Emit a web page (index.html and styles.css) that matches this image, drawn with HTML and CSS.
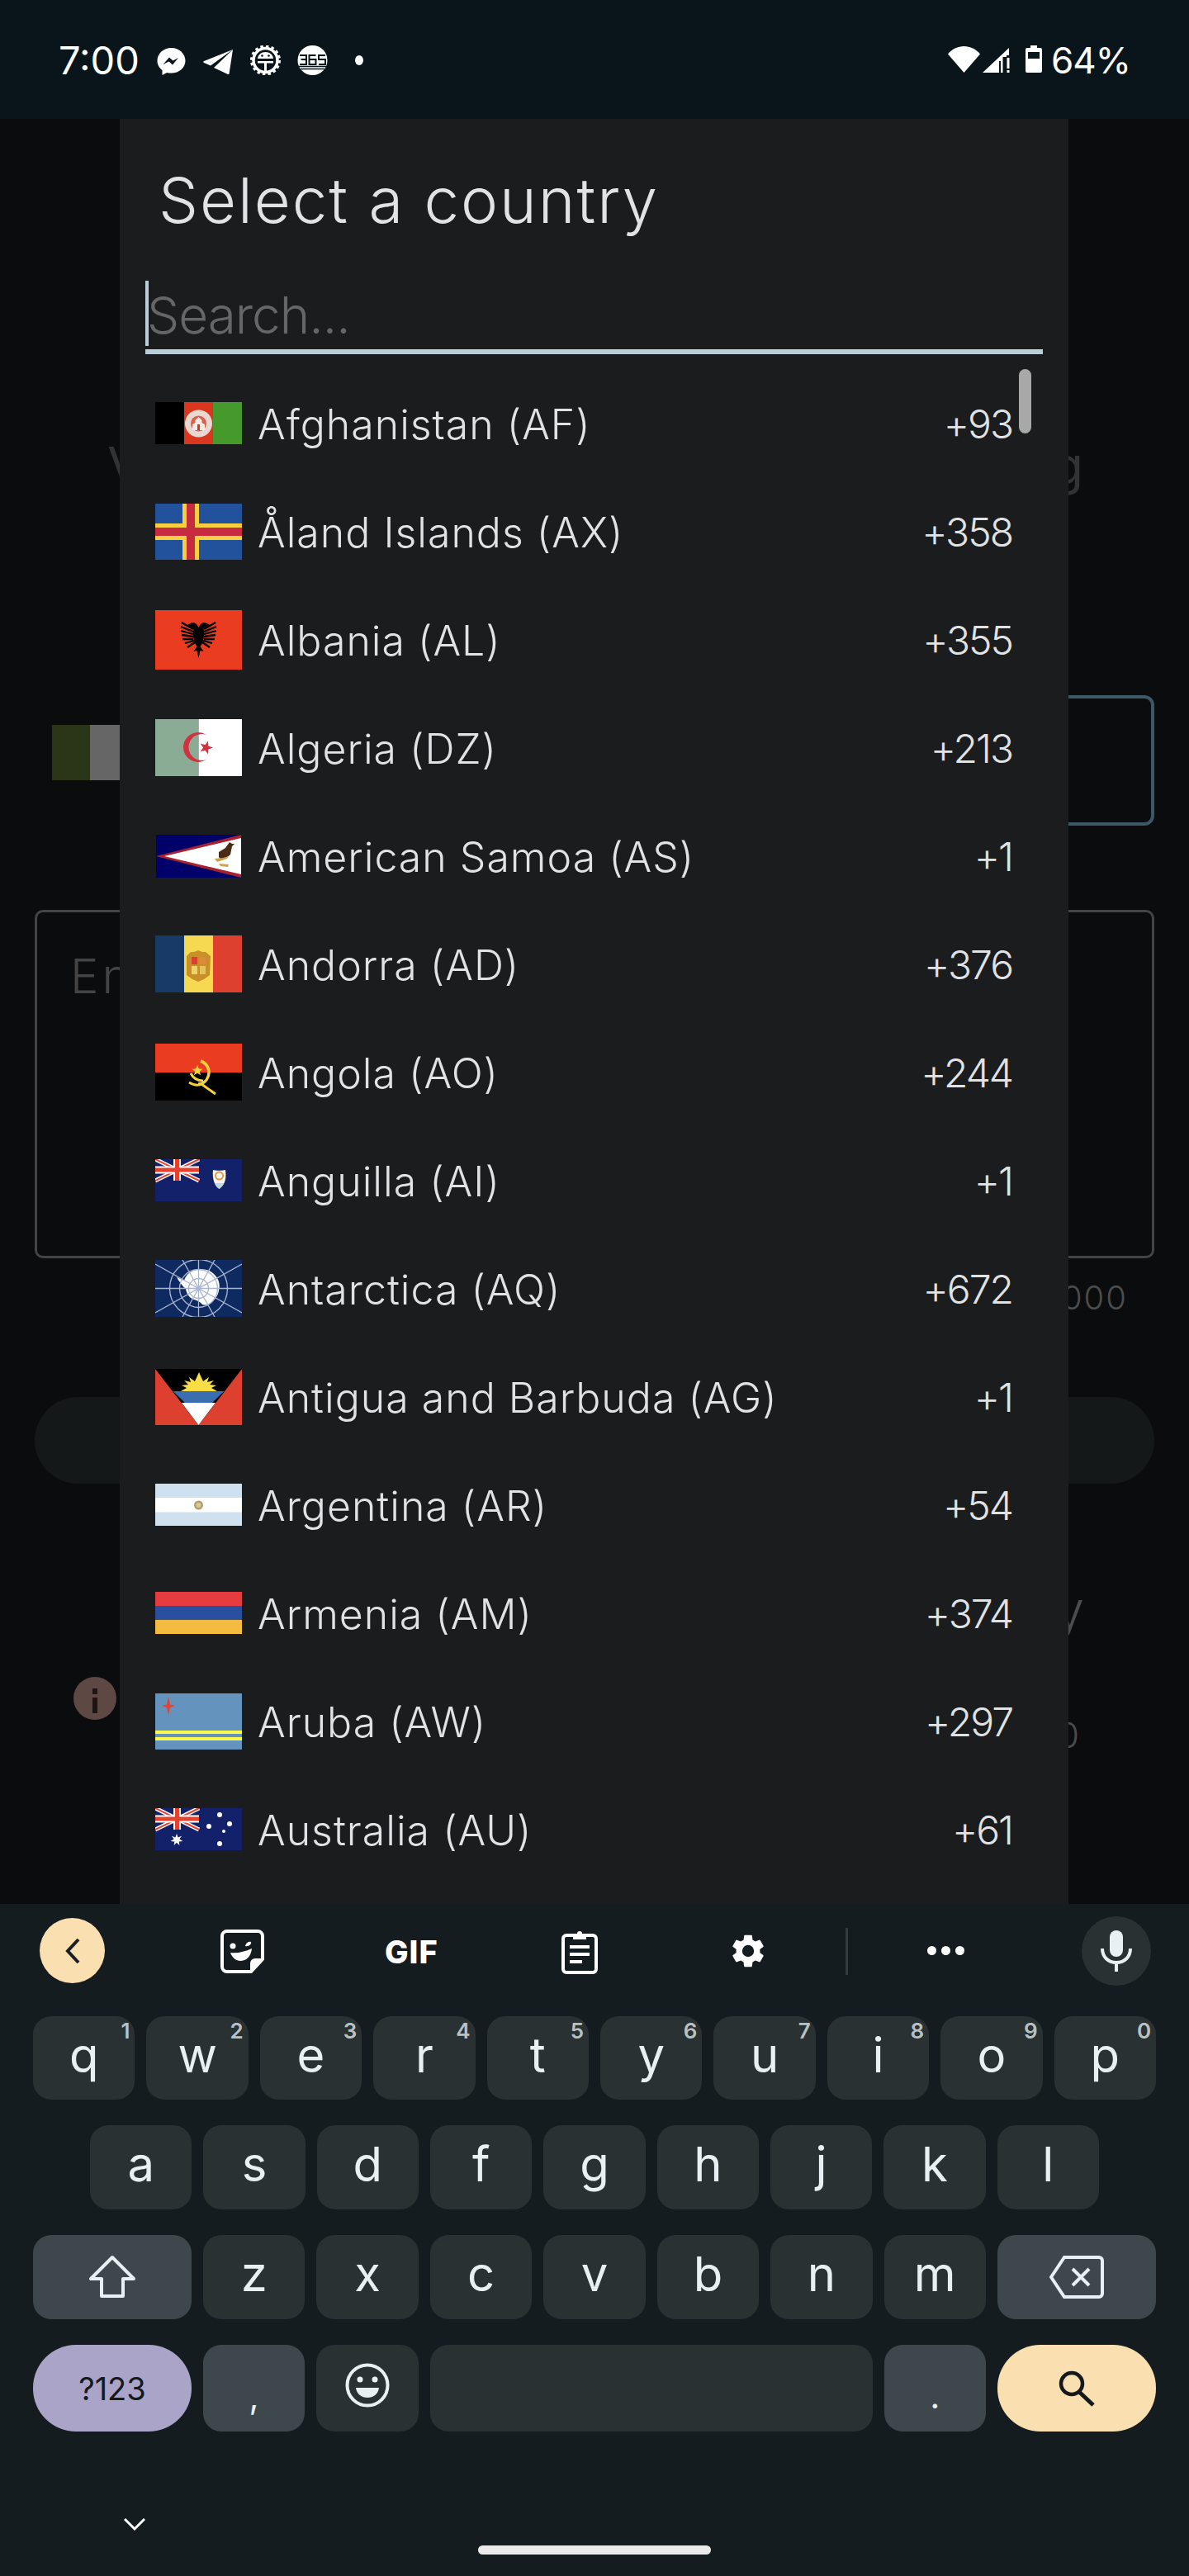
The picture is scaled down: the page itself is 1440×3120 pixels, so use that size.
FILE: index.html
```html
<!DOCTYPE html>
<html lang="en">

<head>
    <meta charset="UTF-8">
    <meta name="viewport" content="width=device-width, initial-scale=1.0">
    <title>Select a country</title>
    <link rel="stylesheet" href="styles.css">
</head>

<body>
    <div class="phone">
        <!-- status bar -->
        <header class="status">
            <div class="status-left">
                <span class="clock">7:00</span>
                <svg class="st-messenger" viewBox="0 0 35 34"><path fill="#fff" d="M17.500 1C8 1 .5 8 .5 16.500c0 4.800 2.300 8.800 6 11.500V34l5.600-3.100c1.700.5 3.500.7 5.400.7 9.500 0 17-6.700 17-15.100S27 1 17.500 1z"/><path fill="#09151b" d="M7.500 21l7.500-8.500 4.500 4 6.500-3.500-7 8.500-4.500-4z"/></svg>
                <svg class="st-telegram" viewBox="0 0 37 30"><path fill="#fff" d="M36 0L1 14c-1 .5-1 1.500 0 2l8 3.500z"/><path fill="#fff" d="M36 0L13 22l17 8c1 .4 1.500 0 1.600-1z"/></svg>
                <svg class="st-bug" viewBox="0 0 37 36"><circle cx="18.500" cy="18" r="14.500" fill="none" stroke="#fff" stroke-width="3.500"/><circle cx="18.500" cy="18" r="17" fill="none" stroke="#fff" stroke-width="3" stroke-dasharray="3.500 3.170"/><path fill="#fff" d="M9 16c.5-5 4.500-8 9.500-8s9 3 9.500 8z"/><path fill="#fff" d="M9 19h19v2.500h-8V31h-3v-9.500H9z"/><circle cx="14.500" cy="12.500" r="1.300" fill="#09151b"/><circle cx="22.500" cy="12.500" r="1.300" fill="#09151b"/></svg>
                <svg class="st-365" viewBox="0 0 37 36"><ellipse cx="18.500" cy="18" rx="18" ry="18" fill="#fff"/><path fill="none" stroke="#09151b" stroke-width="1.500" d="M2 25.500h33M4 28.500h29"/><path fill="none" stroke="#09151b" stroke-width="2" d="M3 12h8v5H4.500M11 17v6H3M22.500 12h-8v11h8v-6h-8M34 12h-8v5h8v6h-8"/></svg>
                <span class="st-dot"></span>
            </div>
            <div class="status-right">
                <svg class="st-wifi" viewBox="0 0 39 32"><path fill="#fff" d="M19.500 32L0 9.500C5 3.500 12 0 19.500 0S34 3.500 39 9.500z"/></svg>
                <svg class="st-signal" viewBox="0 0 33 31"><path fill="#fff" d="M0 31L32 1v9h-3v2h-4.500v19z"/><rect x="20" y="17" width="2" height="14" fill="#09151b"/><rect x="29.500" y="13" width="3" height="13" fill="#fff"/><rect x="29.500" y="28" width="3" height="3" fill="#fff"/></svg>
                <svg class="st-battery" viewBox="0 0 20 33"><path fill="#fff" d="M6 0h8v3h4a2 2 0 0 1 2 2v26a2 2 0 0 1-2 2H2a2 2 0 0 1-2-2V5a2 2 0 0 1 2-2h4z"/><rect x="3" y="8" width="14" height="8" fill="#09151b"/></svg>
                <span class="percent">64%</span>
            </div>
        </header>

        <main class="screen">
            <!-- dimmed page behind the dialog -->
            <div class="page">
                <div class="page-title"><span>V</span><span>g</span></div>
                <div class="phone-row">
                    <div class="page-flag"><i></i><b></b></div>
                    <div class="phone-input"></div>
                </div>
                <div class="message-box">Enter</div>
                <div class="counter">000</div>
                <div class="send-btn"></div>
                <div class="page-note"><span>y</span></div>
                <div class="info-row">
                    <span class="info-icon">
                        <svg viewBox="0 0 52 52"><rect x="23" y="14" width="6" height="7" fill="#1d1615"/><rect x="23" y="25" width="6" height="19" fill="#1d1615"/></svg>
                    </span>
                    <span class="info-tail">0</span>
                </div>
            </div>

            <!-- country dialog -->
            <section class="dialog">
                <h1>Select a country</h1>
                <div class="search">
                    <span class="caret"></span>
                    <span class="placeholder">Search...</span>
                </div>
                <div class="scroll-thumb"></div>
                <ul class="country-list">
                    <li>
                        <span class="flag">
                            <svg width="105" height="51" viewBox="0 0 105 51"><rect width="35" height="51" fill="#000"/><rect x="35" width="35" height="51" fill="#d9381e"/><rect x="70" width="35" height="51" fill="#459a2b"/><circle cx="52.500" cy="26" r="16.500" fill="#e9d8d2"/><circle cx="52.500" cy="26" r="9.500" fill="#d9604a"/><path fill="#f4ebe7" d="M45 34h15v-7l-3.500-2v-3l-4-4-4 4v3L45 27z"/><path fill="#d9381e" d="M51 27h3v7h-3z"/></svg>
                        </span>
                        <span class="name">Afghanistan (AF)</span>
                        <span class="code">+93</span>
                    </li>
                    <li>
                        <span class="flag">
                            <svg width="105" height="68" viewBox="0 0 105 68"><rect width="105" height="68" fill="#21529b"/><rect x="33" width="20" height="68" fill="#f8cf3f"/><rect y="24" width="105" height="20" fill="#f8cf3f"/><rect x="38" width="10" height="68" fill="#c62b3f"/><rect y="29" width="105" height="10" fill="#c62b3f"/></svg>
                        </span>
                        <span class="name">Åland Islands (AX)</span>
                        <span class="code">+358</span>
                    </li>
                    <li>
                        <span class="flag">
                            <svg width="105" height="72" viewBox="0 0 105 72"><rect width="105" height="72" fill="#e93c20"/><g stroke="#000" stroke-width="2.300" fill="none"><path d="M46 23L32 15M46 26L31 20M46 29L31 25M46 32L32 30M46 35L33 35M47 37L36 40M48 39L39 45M59 23L73 15M59 26L74 20M59 29L74 25M59 32L73 30M59 35L72 35M58 37L69 40M57 39L66 45"/></g><path fill="#000" d="M38 19c4-4 9-5 12-2l2.500 4 2.500-4c3-3 8-2 12 2-3 0-7 1-8.500 4 1.500 6 0 14-2 18l-2 3 4 6-4-1-2 9-2-9-4 1 4-6-2-3c-2-4-3.500-12-2-18-1.500-3-5.500-4-8.500-4z"/></svg>
                        </span>
                        <span class="name">Albania (AL)</span>
                        <span class="code">+355</span>
                    </li>
                    <li>
                        <span class="flag">
                            <svg width="105" height="69" viewBox="0 0 105 69"><rect width="52.500" height="69" fill="#8aab94"/><rect x="52.500" width="52.500" height="69" fill="#fff"/><path fill="#d2323f" d="M62 19A18 18 0 1 0 62 49A16 16 0 1 1 62 19z"/><path fill="#d2323f" d="M70 34.500L64.250 36.500L64.100 42.600L60.450 37.700L54.600 39.500L58.100 34.500L54.600 29.500L60.450 31.300L64.100 26.400L64.250 32.500z"/></svg>
                        </span>
                        <span class="name">Algeria (DZ)</span>
                        <span class="code">+213</span>
                    </li>
                    <li>
                        <span class="flag">
                            <svg width="103" height="52" viewBox="0 0 103 52"><rect width="103" height="52" fill="#00006a"/><path fill="#a8212f" d="M0 26L103 0v52z"/><path fill="#fff" d="M10 26l93-22v44z"/><path fill="#4a2c16" d="M76 21l8-5 5-7 3 2 3 0-3 3-2 10-6 5-5 2-3-4z"/><path fill="#c9a24a" d="M71 29l10-1 7-2-2 3-12 4zM76 35l12 1-1 3-9-1z"/></svg>
                        </span>
                        <span class="name">American Samoa (AS)</span>
                        <span class="code">+1</span>
                    </li>
                    <li>
                        <span class="flag">
                            <svg width="105" height="69" viewBox="0 0 105 69"><rect width="35" height="69" fill="#183a66"/><rect x="35" width="35" height="69" fill="#f7d851"/><rect x="70" width="35" height="69" fill="#de402f"/><path fill="#c98f28" d="M38 25l5-5h4l5-2 5 2 4 0 6 5-1 23-7 5-7 3-7-3-7-5z"/><rect x="44" y="26" width="7" height="9" fill="#d9402f"/><rect x="54" y="26" width="7" height="9" fill="#dd8a3a"/><rect x="44" y="37" width="7" height="10" fill="#eed36a"/><rect x="54" y="37" width="7" height="10" fill="#e6c25a"/></svg>
                        </span>
                        <span class="name">Andorra (AD)</span>
                        <span class="code">+376</span>
                    </li>
                    <li>
                        <span class="flag">
                            <svg width="105" height="69" viewBox="0 0 105 69"><rect width="105" height="35" fill="#e93c20"/><rect y="35" width="105" height="34" fill="#000"/><path fill="none" stroke="#f5d33f" stroke-width="3.500" d="M55 21c8 3 12 11 9 19-2 6-7 9-12 9"/><path fill="none" stroke="#f5d33f" stroke-width="3" d="M43 36c3 6 9 9 15 9M41 47c5 3 11 4 15 2l17 12"/><path fill="#f5d33f" d="M51 26l1.800 4.500 4.700.2-3.700 3 1.300 4.600-4.100-2.600-4.100 2.600 1.300-4.600-3.700-3 4.700-.2z"/></svg>
                        </span>
                        <span class="name">Angola (AO)</span>
                        <span class="code">+244</span>
                    </li>
                    <li>
                        <span class="flag">
                            <svg width="105" height="51" viewBox="0 0 105 51"><rect width="105" height="51" fill="#13216b"/><path stroke="#fff" stroke-width="5" d="M0 0l53 26M53 0L0 26"/><path stroke="#e4412f" stroke-width="2" d="M0 0l53 26M53 0L0 26"/><path stroke="#fff" stroke-width="9" d="M26.500 0v26M0 13h53"/><path stroke="#e4412f" stroke-width="5" d="M26.500 0v26M0 13h53"/><path fill="#f4f4f4" d="M70 13c3 1 12 1 15 0 1 8 1 17-7.500 23C71 32 69 22 70 13z"/><path fill="#bcd6ea" d="M72 29h11c-1 3-3 5-5.500 7-2.500-2-4.500-4-5.500-7z"/><circle cx="77.500" cy="20" r="4.500" fill="none" stroke="#e8993a" stroke-width="2"/></svg>
                        </span>
                        <span class="name">Anguilla (AI)</span>
                        <span class="code">+1</span>
                    </li>
                    <li>
                        <span class="flag">
                            <svg width="105" height="69" viewBox="0 0 105 69"><rect width="105" height="69" fill="#0e2a60"/><path fill="#fff" d="M26 21l9 4c2-7 8-12 15-13 8-2 17 0 22 6 5 5 7 12 5 19-1 7-5 11-10 15-3 3-7 3-10 2-2-3-6-5-10-6-6-2-9-7-10-13-4-3-8-9-11-14z"/><g fill="none" stroke="#a9b6d2" stroke-width="1.300"><circle cx="52.500" cy="34.500" r="35"/><circle cx="52.500" cy="34.500" r="23"/><circle cx="52.500" cy="34.500" r="12"/><path d="M52.500 0v69M0 34.500h105M0 5l105 59M105 5L0 64M33 0l39 69M72 0L33 69"/></g></svg>
                        </span>
                        <span class="name">Antarctica (AQ)</span>
                        <span class="code">+672</span>
                    </li>
                    <li>
                        <span class="flag">
                            <svg width="105" height="68" viewBox="0 0 105 68"><rect width="105" height="68" fill="#de402f"/><path fill="#000" d="M0 0h105L52.500 68z"/><path fill="#3a6eae" d="M21.500 27h62L69 41H36z"/><path fill="#fff" d="M32 41h41L52.500 68z"/><path fill="#f8dd47" d="M31 27l7-4-6-3 8-1-5-5 8 2-2-6 7 5 5-11 5 11 7-5-2 6 8-2-5 5 8 1-6 3 7 4z"/></svg>
                        </span>
                        <span class="name">Antigua and Barbuda (AG)</span>
                        <span class="code">+1</span>
                    </li>
                    <li>
                        <span class="flag">
                            <svg width="105" height="51" viewBox="0 0 105 51"><rect width="105" height="51" fill="#cfe0ee"/><rect y="17" width="105" height="17.500" fill="#fff"/><circle cx="52.500" cy="26" r="5.500" fill="#b5a06c"/><circle cx="52.500" cy="26" r="3" fill="#d9c99a"/></svg>
                        </span>
                        <span class="name">Argentina (AR)</span>
                        <span class="code">+54</span>
                    </li>
                    <li>
                        <span class="flag">
                            <svg width="105" height="51" viewBox="0 0 105 51"><rect width="105" height="17" fill="#e53c3f"/><rect y="17" width="105" height="17" fill="#2a4f9f"/><rect y="34" width="105" height="17" fill="#f3bc41"/></svg>
                        </span>
                        <span class="name">Armenia (AM)</span>
                        <span class="code">+374</span>
                    </li>
                    <li>
                        <span class="flag">
                            <svg width="105" height="68" viewBox="0 0 105 68"><rect width="105" height="68" fill="#6494bd"/><rect y="45" width="105" height="4" fill="#fbf94b"/><rect y="53" width="105" height="4" fill="#fbf94b"/><path fill="#e8402f" d="M16 4l2 9.500 6 1.500-6 2-2 9.500-2-9.500-6-2 6-1.500z"/></svg>
                        </span>
                        <span class="name">Aruba (AW)</span>
                        <span class="code">+297</span>
                    </li>
                    <li>
                        <span class="flag">
                            <svg width="105" height="51" viewBox="0 0 105 51"><rect width="105" height="51" fill="#13216b"/><path stroke="#fff" stroke-width="5" d="M0 0l53 26M53 0L0 26"/><path stroke="#e4412f" stroke-width="2" d="M0 0l53 26M53 0L0 26"/><path stroke="#fff" stroke-width="9" d="M26.500 0v26M0 13h53"/><path stroke="#e4412f" stroke-width="5" d="M26.500 0v26M0 13h53"/><path fill="#fff" d="M26 31l1.600 4.400 4.400-1.700-2.600 3.900 4 2.400-4.700.4.700 4.700-3.400-3.400-3.400 3.400.7-4.700-4.700-.4 4-2.400-2.600-3.900 4.400 1.700z"/><circle cx="78" cy="8" r="3" fill="#fff"/><circle cx="90" cy="19" r="3" fill="#fff"/><circle cx="65" cy="22" r="3" fill="#fff"/><circle cx="83" cy="28" r="2" fill="#fff"/><circle cx="78" cy="43" r="3" fill="#fff"/></svg>
                        </span>
                        <span class="name">Australia (AU)</span>
                        <span class="code">+61</span>
                    </li>
                </ul>
            </section>
        </main>

        <!-- keyboard -->
        <footer class="keyboard">
            <div class="kb-tools">
                <span class="tool-back">
                    <svg width="20" height="32" viewBox="0 0 20 32"><path fill="none" stroke="#1a2022" stroke-width="4" d="M17 2L4 16l13 14"/></svg>
                </span>
                <svg class="tool-sticker" width="53" height="53" viewBox="0 0 53 53"><path fill="none" stroke="#fff" stroke-width="4" d="M8 2h37a6 6 0 0 1 6 6v28L37 51H8a6 6 0 0 1-6-6V8a6 6 0 0 1 6-6z"/><path fill="#fff" d="M51 35L36 51V41a6 6 0 0 1 6-6z"/><circle cx="15" cy="20" r="3.500" fill="#fff"/><path fill="#fff" d="M30 20c1-4 4-6 7-5 1 3-3 6-7 5zM12 28c9 1 17-1 26-5-1 10-7 15-14 15-5 0-10-4-12-10z"/></svg>
                <span class="tool-gif">GIF</span>
                <svg class="tool-clip" width="44" height="54" viewBox="0 0 44 54"><path fill="none" stroke="#fff" stroke-width="4" d="M6 7h32a4 4 0 0 1 4 4v37a4 4 0 0 1-4 4H6a4 4 0 0 1-4-4V11a4 4 0 0 1 4-4z"/><path fill="#fff" d="M14 5h5a3 3 0 0 1 6 0h5v7H14zM10 19h24v4H10zM10 28h24v4H10zM10 37h15v4H10z"/></svg>
                <svg class="tool-gear" width="48" height="48" viewBox="0 0 24 24"><path fill="#fff" d="M19.140 12.940c.04-.3.060-.61.060-.94s-.02-.64-.070-.94l2.030-1.580a.49.49 0 0 0 .12-.61l-1.920-3.320a.49.49 0 0 0-.59-.22l-2.390.96a7 7 0 0 0-1.620-.94l-.36-2.540a.48.480 0 0 0-.48-.41h-3.840a.48.480 0 0 0-.47.41l-.36 2.540c-.59.24-1.130.57-1.620.94l-2.390-.96a.48.480 0 0 0-.59.22L2.740 8.870a.48.480 0 0 0 .12.610l2.030 1.580c-.05.3-.09.63-.09.94s.02.64.070.94l-2.030 1.580a.49.49 0 0 0-.12.610l1.920 3.320c.12.22.37.29.59.22l2.390-.96c.5.38 1.030.7 1.620.94l.36 2.540c.05.24.24.41.48.41h3.840c.24 0 .44-.17.47-.41l.36-2.540c.59-.24 1.130-.56 1.620-.94l2.390.96c.22.08.47 0 .59-.22l1.920-3.320a.49.49 0 0 0-.12-.61zM12 15.600A3.600 3.600 0 1 1 12 8.400a3.600 3.600 0 0 1 0 7.200z"/></svg>
                <span class="tool-line"></span>
                <span class="tool-dots"><i></i><i></i><i></i></span>
                <span class="tool-mic">
                    <svg width="38" height="50" viewBox="0 0 38 50"><rect x="11" y="0" width="16" height="32" rx="8" fill="#e9f0f3"/><path fill="none" stroke="#e9f0f3" stroke-width="4" d="M2 22c0 10 7 17 17 17s17-7 17-17M19 38v12"/></svg>
                </span>
            </div>
            <div class="kb-rows">
                <div class="kb-row row-top">
                    <span class="key">q<sup>1</sup></span>
                    <span class="key">w<sup>2</sup></span>
                    <span class="key">e<sup>3</sup></span>
                    <span class="key">r<sup>4</sup></span>
                    <span class="key">t<sup>5</sup></span>
                    <span class="key">y<sup>6</sup></span>
                    <span class="key">u<sup>7</sup></span>
                    <span class="key">i<sup>8</sup></span>
                    <span class="key">o<sup>9</sup></span>
                    <span class="key">p<sup>0</sup></span>
                </div>
                <div class="kb-row row-home">
                    <span class="key">a</span>
                    <span class="key">s</span>
                    <span class="key">d</span>
                    <span class="key">f</span>
                    <span class="key">g</span>
                    <span class="key">h</span>
                    <span class="key">j</span>
                    <span class="key">k</span>
                    <span class="key">l</span>
                </div>
                <div class="kb-row row-shift">
                    <span class="key wide func">
                        <svg width="58" height="54" viewBox="0 0 58 54"><path fill="none" stroke="#e9f0f3" stroke-width="4" stroke-linejoin="round" d="M29 3L3 29h13v21h26V29h13z"/></svg>
                    </span>
                    <span class="key">z</span>
                    <span class="key">x</span>
                    <span class="key">c</span>
                    <span class="key">v</span>
                    <span class="key">b</span>
                    <span class="key">n</span>
                    <span class="key">m</span>
                    <span class="key wide func">
                        <svg width="66" height="52" viewBox="0 0 66 52"><path fill="none" stroke="#e9f0f3" stroke-width="4" d="M18 2h42a4 4 0 0 1 4 4v40a4 4 0 0 1-4 4H18L2 26z"/><path fill="none" stroke="#e9f0f3" stroke-width="4" d="M28 16l20 20M48 16L28 36"/></svg>
                    </span>
                </div>
                <div class="kb-row row-bottom">
                    <span class="key wide pill-num">?123</span>
                    <span class="key func small-mark">,</span>
                    <span class="key">
                        <svg width="54" height="54" viewBox="0 0 54 54"><circle cx="27" cy="27" r="24.500" fill="none" stroke="#e9f0f3" stroke-width="4"/><circle cx="18" cy="20" r="3.500" fill="#e9f0f3"/><circle cx="36" cy="20" r="3.500" fill="#e9f0f3"/><path fill="#e9f0f3" d="M13 30h28c-1 8-7 12-14 12s-13-4-14-12z"/></svg>
                    </span>
                    <span class="key space"></span>
                    <span class="key func small-mark">.</span>
                    <span class="key wide pill-go">
                        <svg width="46" height="46" viewBox="0 0 46 46"><circle cx="17" cy="17" r="13" fill="none" stroke="#15191b" stroke-width="4.500"/><path stroke="#15191b" stroke-width="5" d="M26 27l17 16"/></svg>
                    </span>
                </div>
            </div>
            <div class="kb-bottom">
                <svg class="kb-hide" width="26" height="17" viewBox="0 0 26 17"><path fill="none" stroke="#fff" stroke-width="3" d="M1 2l12 12L25 2"/></svg>
                <span class="home-pill"></span>
            </div>
        </footer>
    </div>
</body>

</html>
```

FILE: styles.css
```css
* {
    box-sizing: border-box;
}

body {
    margin: 0;
    padding: 0;
    background-color: #09151b;
    font-family: "Inter", "Liberation Sans", sans-serif;
}

.phone {
    width: 1440px;
    height: 3120px;
    display: flex;
    flex-direction: column;
    overflow: hidden;
}

/* status bar */
.status {
    height: 144px;
    flex: none;
    background-color: #09151b;
    color: #fff;
    display: flex;
    justify-content: space-between;
    padding: 55px 71px 0 71px;
}

.status-left,
.status-right {
    display: flex;
    align-items: flex-start;
    height: 36px;
}

.clock {
    font-size: 47px;
    line-height: 36px;
    width: 119px;
}

.status svg {
    display: block;
}

.st-messenger { width: 35px; height: 34px; margin-top: 2px; }
.st-telegram { width: 37px; height: 30px; margin: 5px 0 0 21px; }
.st-bug { width: 37px; height: 36px; margin-left: 20px; }
.st-365 { width: 37px; height: 36px; margin-left: 20px; }

.st-dot {
    width: 10px;
    height: 12px;
    border-radius: 50%;
    background-color: #fff;
    margin: 12px 0 0 33px;
}

.st-wifi { width: 39px; height: 32px; margin-top: 1px; }
.st-signal { width: 33px; height: 31px; margin: 2px 0 0 3px; }
.st-battery { width: 20px; height: 33px; margin-left: 19px; }

.percent {
    font-size: 44px;
    line-height: 36px;
    margin-left: 11px;
    letter-spacing: -1px;
}

/* page behind dialog */
.screen {
    position: relative;
    height: 2162px;
    flex: none;
    background-color: #0b0c0e;
    overflow: hidden;
}

.page {
    padding: 0 42px;
    color: #444;
}

.page-title {
    display: flex;
    justify-content: space-between;
    padding: 380px 0 0 88px;
    font-size: 62px;
    line-height: 80px;
    color: #333;
    width: 1270px;
}

.phone-row {
    display: flex;
    gap: 20px;
    margin-top: 238px;
    height: 158px;
    align-items: center;
}

.page-flag {
    width: 105px;
    height: 67px;
    margin: 0 0 19px 21px;
    display: flex;
}

.page-flag i {
    width: 46px;
    background-color: #2b3618;
}

.page-flag b {
    flex: 1;
    background-color: #666;
}

.phone-input {
    flex: 1;
    height: 158px;
    border: 4px solid #3a5866;
    border-radius: 12px;
}

.message-box {
    margin-top: 102px;
    height: 422px;
    border: 3px solid #444;
    border-radius: 10px;
    font-size: 58px;
    font-weight: 300;
    letter-spacing: 4px;
    padding: 42px 40px;
    color: #444;
}

.counter {
    text-align: right;
    font-size: 40px;
    font-weight: 300;
    letter-spacing: 2px;
    line-height: 60px;
    color: #4c4c4c;
    margin-top: 18px;
    padding-right: 32px;
}

.send-btn {
    height: 105px;
    margin-top: 90px;
    border-radius: 53px;
    background-color: #151819;
}

.page-note {
    display: flex;
    justify-content: flex-end;
    font-size: 62px;
    font-weight: 300;
    line-height: 80px;
    color: #4c4c4c;
    margin-top: 113px;
    padding-right: 85px;
}

.info-row {
    display: flex;
    justify-content: space-between;
    align-items: flex-start;
    margin-top: 41px;
    padding: 0 91px 0 47px;
}

.info-icon {
    width: 52px;
    height: 52px;
    border-radius: 50%;
    background-color: #5d4843;
}

.info-icon svg {
    display: block;
}

.info-tail {
    font-size: 42px;
    font-weight: 300;
    color: #4c4c4c;
    margin-top: 45px;
}

/* dialog */
.dialog {
    position: absolute;
    top: 0;
    left: 145px;
    width: 1149px;
    height: 100%;
    background-color: #1b1c1e;
    padding: 0 31px;
    overflow: hidden;
}

.dialog h1 {
    margin: 56px 0 0 16px;
    font-size: 76px;
    line-height: 84px;
    font-weight: 300;
    letter-spacing: 2px;
    color: #e0e2e4;
}

.search {
    position: relative;
    margin-top: 56px;
    height: 89px;
    border-bottom: 6px solid #b9ced8;
}

.caret {
    position: absolute;
    left: 0;
    top: 0;
    width: 4px;
    height: 79px;
    background-color: #b9ced8;
}

.placeholder {
    display: block;
    font-size: 62px;
    line-height: 83px;
    font-weight: 300;
    letter-spacing: -1px;
    color: #666;
    padding-left: 2px;
}

.scroll-thumb {
    position: absolute;
    top: 303px;
    right: 45px;
    width: 15px;
    height: 78px;
    border-radius: 8px;
    background-color: #a8a8a8;
}

.country-list {
    list-style: none;
    margin: 18px 0 0;
    padding: 0 37px 0 12px;
}

.country-list li {
    display: flex;
    align-items: center;
    height: 131px;
    font-size: 50px;
    font-weight: 300;
    color: #e0e2e4;
}

.flag {
    width: 105px;
    flex: none;
    display: flex;
    justify-content: center;
}

.flag svg {
    display: block;
}

.name {
    flex: 1;
    margin-left: 19px;
    padding-top: 2px;
    letter-spacing: 1px;
}

.code {
    padding-top: 2px;
    font-size: 48px;
    letter-spacing: -2px;
}

/* keyboard */
.keyboard {
    flex: 1;
    background-color: #151c1f;
    color: #e9f0f3;
    position: relative;
}

.kb-tools {
    height: 136px;
    position: relative;
}

.kb-tools > * {
    position: absolute;
}

.tool-back {
    left: 48px;
    top: 17px;
    width: 79px;
    height: 79px;
    border-radius: 50%;
    background-color: #fadfb0;
    display: flex;
    align-items: center;
    justify-content: center;
}

.tool-sticker { left: 267px; top: 31px; }

.tool-gif {
    left: 466px;
    top: 42px;
    font-size: 38px;
    line-height: 32px;
    font-weight: 800;
    color: #fff;
    letter-spacing: 1px;
}

.tool-clip { left: 680px; top: 31px; }
.tool-gear { left: 882px; top: 33px; }

.tool-line {
    left: 1024px;
    top: 29px;
    width: 3px;
    height: 57px;
    background-color: #343b3e;
}

.tool-dots {
    left: 1123px;
    top: 51px;
    display: flex;
    gap: 6px;
}

.tool-dots i {
    width: 11px;
    height: 11px;
    border-radius: 50%;
    background-color: #fff;
}

.tool-mic {
    left: 1310px;
    top: 15px;
    width: 84px;
    height: 84px;
    border-radius: 50%;
    background-color: #293133;
    display: flex;
    align-items: center;
    justify-content: center;
}

.kb-rows {
    display: flex;
    flex-direction: column;
    gap: 31px;
    padding: 0 40px;
}

.kb-row {
    display: flex;
    gap: 14px;
    height: 102px;
}

.row-top { height: 101px; }
.row-home { padding: 0 69px; }
.row-bottom { height: 105px; }

.key {
    flex: 1 1 0;
    position: relative;
    display: flex;
    align-items: center;
    justify-content: center;
    background-color: #293133;
    border-radius: 22px;
    font-size: 58px;
    line-height: 1;
    padding-bottom: 8px;
}

.key sup {
    position: absolute;
    top: 8px;
    right: 6px;
    font-size: 26px;
    line-height: 20px;
    font-weight: 600;
    color: #b9c1c3;
}

.key.wide {
    flex: 0 0 192px;
    padding-bottom: 0;
}

.key.func {
    background-color: #3e474b;
}

.key.space {
    flex: 0 0 536px;
}

.pill-num {
    background-color: #a9a4c8;
    border-radius: 52px;
    color: #15191b;
    font-size: 38px;
}

.pill-go {
    background-color: #fadfb0;
    border-radius: 52px;
}

.small-mark {
    font-size: 42px;
    padding-top: 26px;
}

.kb-bottom {
    position: relative;
}

.kb-hide {
    position: absolute;
    left: 150px;
    top: 104px;
}

.home-pill {
    position: absolute;
    left: 579px;
    top: 138px;
    width: 282px;
    height: 11px;
    border-radius: 6px;
    background-color: #eaeaea;
}
```
